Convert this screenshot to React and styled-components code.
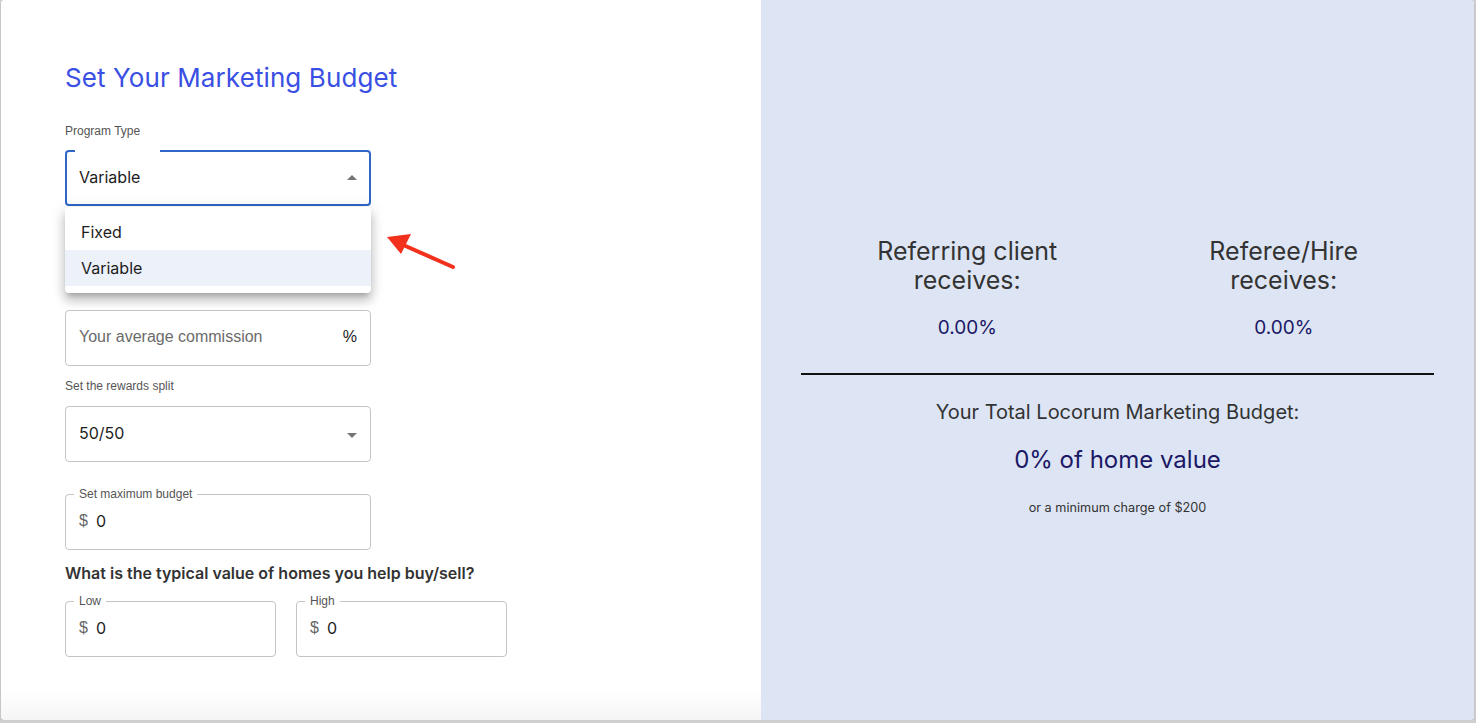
import styled, { createGlobalStyle } from "styled-components";

const GlobalStyle = createGlobalStyle`
  body {
    margin: 0;
    background: #cfcfcf;
    font-family: "Inter", "Liberation Sans", sans-serif;
  }
`;

const Card = styled.div`
  display: grid;
  grid-template-columns: 760px minmax(0, 1fr);
  height: 720px;
  margin: 0 2px 0 1px;
  border-radius: 4px;
  overflow: hidden;
  background: #fff;
  box-shadow: 0 1px 2px rgba(0, 0, 0, 0.15);
`;

const LeftPanel = styled.div`
  position: relative;
  padding: 63px 0 0 64px;
  background: linear-gradient(to bottom, #fff 0, #fff 690px, #f5f5f5 720px);
`;

const Title = styled.h1`
  margin: 0;
  font-family: "Inter", sans-serif;
  font-weight: 400;
  font-size: 26px;
  line-height: 30px;
  color: #3a4fe3;
  letter-spacing: 0.1px;
`;

const SmallLabel = styled.div`
  font-family: "Liberation Sans", Arial, sans-serif;
  font-size: 12px;
  line-height: 16px;
  color: #555;
  margin-top: ${(p) => p.$top || 0}px;
  margin-bottom: ${(p) => p.$bottom || 0}px;
`;

const FieldWrap = styled.div`
  position: relative;
  width: ${(p) => p.$width || 306}px;
  margin-top: ${(p) => p.$top || 0}px;
`;

const Box = styled.div`
  box-sizing: border-box;
  height: 56px;
  display: flex;
  align-items: center;
  padding-bottom: 2px;
  border-radius: 4px;
  border: ${(p) => (p.$focused ? "2px solid #2f66c8" : "1px solid #c4c4c4")};
  padding-left: ${(p) => (p.$focused ? 12 : 13)}px;
  padding-right: ${(p) => (p.$focused ? 12 : 13)}px;
  font-family: "Inter", sans-serif;
  font-size: 16px;
  color: #1d1d1d;
`;

const Notch = styled.span`
  position: absolute;
  top: -2px;
  left: ${(p) => p.$left || 9}px;
  height: 4px;
  width: ${(p) => p.$width}px;
  background: #fff;
`;

const FloatLabel = styled.span`
  position: absolute;
  top: -8px;
  left: 9px;
  padding: 0 5px;
  background: #fff;
  font-family: "Liberation Sans", Arial, sans-serif;
  font-size: 12px;
  line-height: 16px;
  color: #555;
`;

const Value = styled.span`
  flex: 1;
`;

const Placeholder = styled.span`
  flex: 1;
  color: #6b6b6b;
  font-family: "Liberation Sans", Arial, sans-serif;
`;

const Suffix = styled.span`
  font-family: "Liberation Sans", Arial, sans-serif;
  color: #222;
`;

const Dollar = styled.span`
  font-family: "Liberation Sans", Arial, sans-serif;
  color: #666;
  margin-right: 8px;
`;

const Caret = styled.span`
  width: 0;
  height: 0;
  border-left: 5px solid transparent;
  border-right: 5px solid transparent;
  ${(p) =>
    p.$up
      ? "border-bottom: 5px solid #757575;"
      : "border-top: 5px solid #757575;"}
  margin-top: ${(p) => (p.$up ? 1 : 4)}px;
`;

const Menu = styled.ul`
  position: absolute;
  top: 57px;
  left: 0;
  right: 0;
  margin: 0;
  padding: 7px 0;
  list-style: none;
  background: #fff;
  border-radius: 4px;
  box-shadow: 0 5px 5px -3px rgba(0, 0, 0, 0.2), 0 8px 10px 1px rgba(0, 0, 0, 0.14),
    0 3px 14px 2px rgba(0, 0, 0, 0.12);
  z-index: 2;
`;

const MenuItem = styled.li`
  height: 36px;
  display: flex;
  align-items: center;
  padding: 0 16px;
  font-family: "Inter", sans-serif;
  font-size: 16px;
  color: #1d1d1d;
  background: ${(p) => (p.$selected ? "#edf1fa" : "transparent")};
`;

const Question = styled.h3`
  margin: 13px 0 0;
  font-family: "Inter", sans-serif;
  font-weight: 600;
  font-size: 16px;
  line-height: 20px;
  color: #333;
`;

const PairRow = styled.div`
  display: flex;
  gap: 20px;
  margin-top: 18px;
`;

const Arrow = styled.svg`
  position: absolute;
  left: 380px;
  top: 228px;
`;

const RightPanel = styled.div`
  background: #dde5f4;
  padding: 237px 40px 0;
  font-family: "Inter", sans-serif;
  color: #333;
  text-align: center;
`;

const SplitRow = styled.div`
  display: flex;
  margin: 0 -8px 0 8px;
`;

const SplitCol = styled.div`
  flex: 1;
`;

const SplitHead = styled.div`
  font-size: 25px;
  line-height: 29px;
  color: #333;
`;

const Percent = styled.div`
  margin-top: 22px;
  font-size: 19px;
  line-height: 22px;
  color: #1b1866;
`;

const Divider = styled.hr`
  margin: 34px 0 0;
  border: 0;
  border-top: 2px solid #111;
`;

const TotalLabel = styled.div`
  margin-top: 25px;
  font-size: 20px;
  line-height: 24px;
  color: #333;
`;

const TotalValue = styled.div`
  margin-top: 21px;
  font-size: 24px;
  line-height: 30px;
  color: #1b1866;
`;

const MinCharge = styled.div`
  margin-top: 25px;
  font-size: 12.7px;
  line-height: 16px;
  color: #333;
`;

export default function App() {
  return (
    <>
      <GlobalStyle />
      <Card>
        <LeftPanel>
          <Title>Set Your Marketing Budget</Title>
          <SmallLabel $top={30} $bottom={11}>
            Program Type
          </SmallLabel>
          <FieldWrap>
            <Box $focused>
              <Notch $left={10} $width={85} />
              <Value>Variable</Value>
              <Caret $up />
            </Box>
            <Menu>
              <MenuItem>Fixed</MenuItem>
              <MenuItem $selected>Variable</MenuItem>
            </Menu>
          </FieldWrap>
          <FieldWrap $top={104}>
            <Box>
              <Placeholder>Your average commission</Placeholder>
              <Suffix>%</Suffix>
            </Box>
          </FieldWrap>
          <SmallLabel $top={12} $bottom={12}>
            Set the rewards split
          </SmallLabel>
          <FieldWrap>
            <Box>
              <Value>50/50</Value>
              <Caret />
            </Box>
          </FieldWrap>
          <FieldWrap $top={32}>
            <Box>
              <FloatLabel>Set maximum budget</FloatLabel>
              <Dollar>$</Dollar>
              <Value>0</Value>
            </Box>
          </FieldWrap>
          <Question>What is the typical value of homes you help buy/sell?</Question>
          <PairRow>
            <FieldWrap $width={211}>
              <Box>
                <FloatLabel>Low</FloatLabel>
                <Dollar>$</Dollar>
                <Value>0</Value>
              </Box>
            </FieldWrap>
            <FieldWrap $width={211}>
              <Box>
                <FloatLabel>High</FloatLabel>
                <Dollar>$</Dollar>
                <Value>0</Value>
              </Box>
            </FieldWrap>
          </PairRow>
          <Arrow width="80" height="50" viewBox="0 0 80 50">
            <line x1="72" y1="39" x2="20" y2="16" stroke="#f2311d" strokeWidth="4" strokeLinecap="round" />
            <polygon points="6,9 30,6 20,26" fill="#f2311d" />
          </Arrow>
        </LeftPanel>
        <RightPanel>
          <SplitRow>
            <SplitCol>
              <SplitHead>
                Referring client
                <br />
                receives:
              </SplitHead>
              <Percent>0.00%</Percent>
            </SplitCol>
            <SplitCol>
              <SplitHead>
                Referee/Hire
                <br />
                receives:
              </SplitHead>
              <Percent>0.00%</Percent>
            </SplitCol>
          </SplitRow>
          <Divider />
          <TotalLabel>Your Total Locorum Marketing Budget:</TotalLabel>
          <TotalValue>0% of home value</TotalValue>
          <MinCharge>or a minimum charge of $200</MinCharge>
        </RightPanel>
      </Card>
    </>
  );
}
